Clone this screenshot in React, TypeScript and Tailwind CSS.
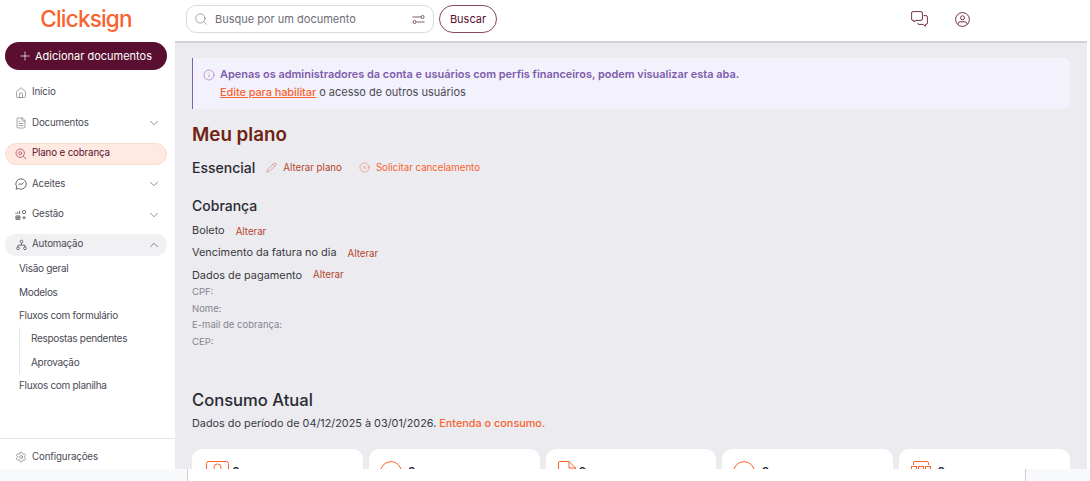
import { ChevronDown, ChevronUp, FileText, House, Info, Pencil, Plus, Search, Settings, CircleX } from "lucide-react";

const font = { fontFamily: "Inter, 'Liberation Sans', sans-serif" };

const PlanIcon = () => (
  <svg width="12" height="12" viewBox="0 0 12 12" fill="none" stroke="#b0566a" strokeWidth="0.9">
    <circle cx="5.2" cy="5.2" r="4.2" />
    <circle cx="5.2" cy="5.2" r="1.5" />
    <path d="M8.3 8.3 11 11" />
  </svg>
);

const AceitesIcon = () => (
  <svg width="12" height="12" viewBox="0 0 12 12" fill="none" stroke="#55555f" strokeWidth="0.9">
    <path d="M6 .8a5.2 5.2 0 1 1-2.6 9.7L1 11.2l.7-2.3A5.2 5.2 0 0 1 6 .8Z" />
    <path d="M3.4 7 5 5.6l1.2 1L8.7 4.6" />
  </svg>
);

const GestaoIcon = () => (
  <svg width="13" height="12" viewBox="0 0 13 12" fill="none" stroke="#55555f" strokeWidth="0.9">
    <path d="M1 5V3.5M3 5V2.5M5 5V1.5" />
    <rect x="8" y="1" width="3.6" height="3.6" rx="1.8" />
    <path d="M1 7h4.4v3.8H1zM1 8.9h4.4M3.2 7v3.8" />
    <path d="M9.8 7v3.8M7.9 8.9h3.8" />
  </svg>
);

const AutomationIcon = () => (
  <svg width="11" height="12" viewBox="0 0 12 12" fill="none" stroke="#55555f" strokeWidth="0.9">
    <circle cx="6" cy="2.2" r="1.5" />
    <circle cx="2.2" cy="9.6" r="1.5" />
    <circle cx="9.8" cy="9.6" r="1.5" />
    <path d="M6 3.7v2.5M2.2 8.1V6.2h7.6v1.9" />
  </svg>
);

const FilterIcon = () => (
  <svg width="13" height="11" viewBox="0 0 13 11" fill="none" stroke="#6f4a5a" strokeWidth="0.9">
    <path d="M.5 3h8.6M4.6 8h8" />
    <circle cx="10.6" cy="3" r="1.5" />
    <circle cx="2.6" cy="8" r="1.5" />
  </svg>
);

const ChatIcon = () => (
  <svg width="17" height="16" viewBox="0 0 17 16" fill="none" stroke="#76304d" strokeWidth="1">
    <path d="M2 .6h8a1.4 1.4 0 0 1 1.4 1.4v6A1.4 1.4 0 0 1 10 9.4H5L3 11V9.4H2A1.4 1.4 0 0 1 .6 8V2A1.4 1.4 0 0 1 2 .6Z" />
    <path d="M12.6 4.6h2.4a1.4 1.4 0 0 1 1.4 1.4v6a1.4 1.4 0 0 1-1.4 1.4h-.6v1.8l-2.2-1.8H8a1.4 1.4 0 0 1-1.4-1.2" />
  </svg>
);

const UserIcon = () => (
  <svg width="15" height="15" viewBox="0 0 15 15" fill="none" stroke="#76304d" strokeWidth="1">
    <circle cx="7.5" cy="7.5" r="6.9" />
    <circle cx="7.5" cy="5.8" r="2" />
    <path d="M3.2 12.6V11.6A1.8 1.8 0 0 1 5 9.8h5a1.8 1.8 0 0 1 1.8 1.8v1" />
  </svg>
);

const ContactCardIcon = () => (
  <svg width="23" height="22" viewBox="0 0 23 22" fill="none" stroke="#f9632f" strokeWidth="1">
    <rect x=".5" y=".5" width="22" height="21" rx="2" />
    <circle cx="11.5" cy="6.5" r="3.6" />
    <path d="M4.5 18a7 5 0 0 1 14 0" />
  </svg>
);

const CircleIcon = () => (
  <svg width="22" height="22" viewBox="0 0 22 22" fill="none" stroke="#f9632f" strokeWidth="1">
    <circle cx="11" cy="11" r="10.4" />
  </svg>
);

const DocIcon = () => (
  <svg width="18" height="22" viewBox="0 0 18 22" fill="none" stroke="#f9632f" strokeWidth="1">
    <path d="M2 .5h9L17.5 7v13a1.5 1.5 0 0 1-1.5 1.5H2A1.5 1.5 0 0 1 .5 20V2A1.5 1.5 0 0 1 2 .5Z" />
    <path d="M11 .5V7h6.5" />
  </svg>
);

const SeatsIcon = () => (
  <svg width="20" height="22" viewBox="0 0 20 22" fill="none" stroke="#f9632f" strokeWidth="1">
    <path d="M2.5 4V2A1.5 1.5 0 0 1 4 .5h12A1.5 1.5 0 0 1 17.5 2v2" />
    <rect x=".5" y="5.5" width="5" height="6" />
    <rect x="7.5" y="5.5" width="5" height="6" />
    <rect x="14.5" y="5.5" width="5" height="6" />
  </svg>
);

const NavRow = ({ icon, label, chevron, active }: { icon: React.ReactNode; label: string; chevron?: boolean; active?: boolean }) => (
  <div
    className={`ml-[5px] mr-[8px] flex h-[22px] items-center rounded-full pr-[6px] text-[9.75px] tracking-[-0.15px] ${
      active ? "bg-[#ffe9e1] pl-[9px] text-[#5a1030] border border-[#fbdcd0]" : "pl-[10px] text-[#4a4a55]"
    }`}
  >
    <span className="mr-[5px] flex w-[12px] justify-center">{icon}</span>
    <span className="flex-1">{label}</span>
    {chevron && <ChevronDown size={14} strokeWidth={1.1} className="text-[#55555f]" />}
  </div>
);

const UsageCard = ({ icon, inner }: { icon: React.ReactNode; inner: string }) => (
  <div className="h-[40px] flex-1 rounded-t-[10px] bg-white pt-[12px]">
    <div className={`flex items-start ${inner}`}>
      {icon}
      <span className="mt-[5px] text-[12px] font-semibold leading-none text-[#2a2a33]">0</span>
    </div>
  </div>
);

export default function App() {
  return (
    <div style={font} className="flex h-[481px] w-[1090px] flex-col overflow-hidden bg-white">
      <div className="flex h-[469px]">
        {/* Sidebar */}
        <aside className="flex w-[175px] shrink-0 flex-col bg-white">
          <div className="flex h-[42px] items-start justify-center pt-[5px] pr-[3px]">
            <span className="text-[22.5px] font-medium leading-[28px] tracking-[-0.8px] text-[#f9632f]">Clicksign</span>
          </div>
          <button className="ml-[5px] mr-[8px] flex h-[28px] items-center justify-center gap-[3px] rounded-full bg-[#5a0f30] pr-[2px] text-[11px] text-white">
            <Plus size={14} strokeWidth={1.2} />
            Adicionar documentos
          </button>
          <div className="mt-[11.5px] flex flex-col gap-[8.5px]">
            <NavRow icon={<House size={12} strokeWidth={1} />} label="Início" />
            <NavRow icon={<FileText size={12} strokeWidth={1} />} label="Documentos" chevron />
            <NavRow active icon={<PlanIcon />} label="Plano e cobrança" />
            <NavRow icon={<AceitesIcon />} label="Aceites" chevron />
            <NavRow icon={<GestaoIcon />} label="Gestão" chevron />
          </div>
          <div className="ml-[5px] mr-[8px] mt-[8px] flex h-[22px] items-center rounded-full bg-[#f1f1f3] pl-[10px] pr-[6px] text-[9.75px] tracking-[-0.15px] text-[#4a4a55]">
            <span className="mr-[5px] flex w-[12px] justify-center">
              <AutomationIcon />
            </span>
            <span className="flex-1">Automação</span>
            <ChevronUp size={14} strokeWidth={1.1} />
          </div>
          <div className="mt-[1.5px] flex flex-col pl-[19px] text-[10px] tracking-[-0.3px] text-[#4a4a55]">
            <div className="flex h-[23.4px] items-center">Visão geral</div>
            <div className="flex h-[23.4px] items-center">Modelos</div>
            <div className="flex h-[23.4px] items-center">Fluxos com formulário</div>
            <div className="flex flex-col border-l border-[#e6e6ea] pl-[11px]">
              <div className="flex h-[23.4px] items-center">Respostas pendentes</div>
              <div className="flex h-[23.4px] items-center">Aprovação</div>
            </div>
            <div className="flex h-[23.4px] items-center">Fluxos com planilha</div>
          </div>
          <div className="mt-auto flex h-[31px] items-center border-t border-[#e6e6ea] pl-[15px] pt-[6px] text-[9.75px] tracking-[-0.15px] text-[#4a4a55]">
            <Settings size={12} strokeWidth={1} className="mr-[5px]" />
            Configurações
          </div>
        </aside>

        <div className="flex min-w-0 flex-1 flex-col pr-[3px]">
          {/* Header */}
          <header className="flex h-[43px] shrink-0 items-center border-b-2 border-[#d2d2d6] bg-white pb-[3px] pl-[11px]">
            <div className="flex h-[28px] w-[248px] items-center rounded-[10px] border border-[#d9d9de] pl-[7px] pr-[8px] text-[11px] text-[#6c6c75]">
              <Search size={14} strokeWidth={1} className="mr-[7px] text-[#6c6c75]" />
              <span className="flex-1">Busque por um documento</span>
              <FilterIcon />
            </div>
            <button className="ml-[5px] flex h-[28px] w-[58px] items-center justify-center rounded-full border border-[#8a4a60] text-[11px] text-[#5a0f30]">
              Buscar
            </button>
            <span className="ml-[414px] flex">
              <ChatIcon />
            </span>
            <span className="ml-[27px] flex">
              <UserIcon />
            </span>
          </header>

          {/* Main */}
          <main className="min-h-0 flex-1 overflow-hidden bg-[#ebebf0] pl-[17px] pr-[17px] pt-[15px]">
            <div className="flex h-[51px] rounded-r-[6px] border-l border-[#8160b5] bg-[#f3f1fb] pl-[10px] pt-[8px] text-[11px]">
              <Info size={12} strokeWidth={1.1} className="mr-[5px] mt-[3px] text-[#8160b5]" />
              <div className="leading-[17.5px]">
                <div className="text-[10.95px] font-semibold text-[#7d5cae]">
                  Apenas os administradores da conta e usuários com perfis financeiros, podem visualizar esta aba.
                </div>
                <div className="text-[#4a4a55]">
                  <span className="font-medium tracking-[-0.1px] text-[#f9632f] underline">Edite para habilitar</span> o acesso de outros usuários
                </div>
              </div>
            </div>

            <h1 className="mt-[13px] text-[18.75px] font-semibold leading-[26px] text-[#6e2410]">Meu plano</h1>

            <div className="mt-[10px] flex h-[18px] items-center">
              <span className="text-[14px] font-medium text-[#2a2a33]">Essencial</span>
              <Pencil size={11} strokeWidth={1} className="ml-[11px] text-[#c0593a]" />
              <span className="ml-[6px] mt-[2px] text-[9.7px] text-[#b3472b]">Alterar plano</span>
              <CircleX size={11} strokeWidth={1} className="ml-[17px] text-[#f9632f]" />
              <span className="ml-[6px] mt-[2px] text-[9.7px] text-[#f9632f]">Solicitar cancelamento</span>
            </div>

            <h2 className="mt-[21px] text-[14px] font-medium leading-[18px] text-[#2a2a33]">Cobrança</h2>
            <div className="mt-[7px] flex h-[16px] items-center gap-[11px] text-[10.9px] text-[#3a3a44]">
              Boleto <span className="mt-[4px] text-[9.7px] text-[#b3472b]">Alterar</span>
            </div>
            <div className="mt-[6px] flex h-[16px] items-center gap-[11px] text-[10.9px] text-[#3a3a44]">
              Vencimento da fatura no dia <span className="mt-[4px] text-[9.7px] text-[#b3472b]">Alterar</span>
            </div>
            <div className="mt-[7px] flex h-[16px] items-center gap-[11px] text-[10.9px] text-[#3a3a44]">
              Dados de pagamento <span className="text-[9.7px] text-[#b3472b]">Alterar</span>
            </div>
            <div className="mt-[1px] flex flex-col text-[9.5px] leading-[16.6px] text-[#85858f]">
              <span>CPF:</span>
              <span>Nome:</span>
              <span>E-mail de cobrança:</span>
              <span>CEP:</span>
            </div>

            <h2 className="mt-[38px] text-[16.6px] font-medium leading-[24px] text-[#2a2a33]">Consumo Atual</h2>
            <div className="mt-[3px] text-[10.85px] leading-[16px] text-[#3a3a44]">
              Dados do período de 04/12/2025 à 03/01/2026. <span className="font-medium text-[#f9632f]">Entenda o consumo.</span>
            </div>

            <div className="mt-[18px] flex gap-[6px]">
              <UsageCard inner="gap-[3px] pl-[14px]" icon={<ContactCardIcon />} />
              <UsageCard inner="gap-[6px] pl-[11px]" icon={<CircleIcon />} />
              <UsageCard inner="gap-[3px] pl-[12px]" icon={<DocIcon />} />
              <UsageCard inner="gap-[6px] pl-[11px]" icon={<CircleIcon />} />
              <UsageCard inner="gap-[6px] pl-[12px]" icon={<SeatsIcon />} />
            </div>
          </main>
        </div>
      </div>

      {/* Bottom strip */}
      <div className="flex h-[12px] shrink-0">
        <div className="w-[188px] border-r border-[#cfcfd3] bg-[#f8f9fb]" />
        <div className="flex-1 bg-white" />
        <div className="w-[65px] border-l border-[#cfcfd3] bg-[#f8f9fb]" />
      </div>
    </div>
  );
}
